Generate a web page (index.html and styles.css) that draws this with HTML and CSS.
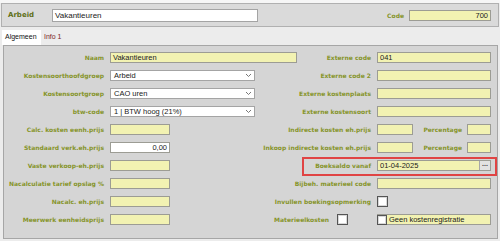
FILE: index.html
```html
<!DOCTYPE html>
<html lang="nl">
<head>
    <meta charset="UTF-8">
    <title>Kostensoort</title>
    <link rel="stylesheet" href="styles.css">
</head>
<body>
    <div class="header">
        <span class="head-label">Arbeid</span>
        <div class="head-input">Vakantieuren</div>
        <span class="spacer"></span>
        <span class="lbl">Code</span>
        <div class="fld code-fld">700</div>
    </div>
    <div class="tabs">
        <span class="tab active">Algemeen</span>
        <span class="tab">Info 1</span>
    </div>
    <div class="panel">
        <div class="form">
            <!-- rij 1 -->
            <span class="lbl">Naam</span>
            <div class="fld">Vakantieuren</div>
            <span class="lbl">Externe code</span>
            <div class="fld">041</div>
            <!-- rij 2 -->
            <span class="lbl">Kostensoorthoofdgroep</span>
            <div class="sel"><span>Arbeid</span><svg width="7" height="5" viewBox="0 0 7 5"><polyline points="1,1 3.5,3.5 6,1" fill="none" stroke="#777" stroke-width="1"/></svg></div>
            <span class="lbl">Externe code 2</span>
            <div class="fld"></div>
            <!-- rij 3 -->
            <span class="lbl">Kostensoortgroep</span>
            <div class="sel"><span>CAO uren</span><svg width="7" height="5" viewBox="0 0 7 5"><polyline points="1,1 3.5,3.5 6,1" fill="none" stroke="#777" stroke-width="1"/></svg></div>
            <span class="lbl">Externe kostenplaats</span>
            <div class="fld"></div>
            <!-- rij 4 -->
            <span class="lbl">btw-code</span>
            <div class="sel"><span>1 | BTW hoog (21%)</span><svg width="7" height="5" viewBox="0 0 7 5"><polyline points="1,1 3.5,3.5 6,1" fill="none" stroke="#777" stroke-width="1"/></svg></div>
            <span class="lbl">Externe kostensoort</span>
            <div class="fld"></div>
            <!-- rij 5 -->
            <span class="lbl">Calc. kosten eenh.prijs</span>
            <div class="cell"><div class="fld small"></div></div>
            <span class="lbl">Indirecte kosten eh.prijs</span>
            <div class="cell">
                <div class="fld pct-a"></div>
                <span class="lbl pct-lbl">Percentage</span>
                <div class="fld pct-b"></div>
            </div>
            <!-- rij 6 -->
            <span class="lbl">Standaard verk.eh.prijs</span>
            <div class="cell"><div class="fld small white num">0,00</div></div>
            <span class="lbl">Inkoop indirecte kosten eh.prijs</span>
            <div class="cell">
                <div class="fld pct-a"></div>
                <span class="lbl pct-lbl">Percentage</span>
                <div class="fld pct-b"></div>
            </div>
            <!-- rij 7 -->
            <span class="lbl">Vaste verkoop-eh.prijs</span>
            <div class="cell"><div class="fld small"></div></div>
            <span class="lbl">Boeksaldo vanaf</span>
            <div class="fld date-fld"><span>01-04-2025</span><span class="dots">...</span></div>
            <!-- rij 8 -->
            <span class="lbl">Nacalculatie tarief opslag %</span>
            <div class="cell"><div class="fld small"></div></div>
            <span class="lbl">Bijbeh. materieel code</span>
            <div class="fld"></div>
            <!-- rij 9 -->
            <span class="lbl">Nacalc. eh.prijs</span>
            <div class="cell"><div class="fld small"></div></div>
            <span class="lbl">Invullen boekingsopmerking</span>
            <div class="cell"><span class="cb"></span></div>
            <!-- rij 10 -->
            <span class="lbl">Meerwerk eenheidsprijs</span>
            <div class="cell"><div class="fld small"></div></div>
            <span class="lbl mat-lbl">Materieelkosten <span class="cb"></span></span>
            <div class="fld cb-fld"><span class="cb"></span><span>Geen kostenregistratie</span></div>
        </div>
        <div class="highlight"></div>
    </div>
</body>
</html>
```

FILE: styles.css
```css
*{
    box-sizing: border-box;
}
body{
    margin: 0;
    background: #ececec;
    font-family: "Liberation Sans", Arial, sans-serif;
    border-top: 3px solid #f6f6f6;
}
.header{
    margin: 0 1px;
    height: 24px;
    border: 1px solid #b0b0b0;
    background: #dadada;
    display: flex;
    align-items: center;
    padding: 0 7px 0 6px;
}
.head-label{
    width: 44px;
    font-family: "DejaVu Sans", sans-serif;
    font-weight: bold;
    font-size: 7px;
    color: #5f6f16;
}
.head-input{
    width: 206px;
    height: 13px;
    background: #fff;
    border: 1px solid #a4a4a4;
    font-size: 8px;
    line-height: 11px;
    padding-left: 2px;
    color: #222;
}
.spacer{
    flex: 1;
}
.code-fld{
    width: 82px;
    margin-left: 5px;
    text-align: right;
    padding-right: 2px;
}
.tabs{
    height: 18px;
    display: flex;
    align-items: flex-end;
    padding-left: 2px;
}
.tab{
    height: 15px;
    padding: 0 4px 0 3px;
    font-size: 7px;
    line-height: 14px;
    color: #7a1f1f;
}
.tab.active{
    width: 39px;
    background: #fff;
    color: #111;
}
.panel{
    position: relative;
    margin: 0 2px 0 3px;
    height: 194px;
    border: 1px solid #a6a6a6;
    background: #d5d5d5;
    padding-top: 6px;
}
.form{
    display: grid;
    grid-template-columns: 100px 187px 68px 114px;
    grid-auto-rows: 11px;
    column-gap: 6px;
    row-gap: 7px;
}
.lbl{
    display: flex;
    align-items: center;
    justify-content: flex-end;
    white-space: nowrap;
    font-family: "DejaVu Sans", sans-serif;
    font-weight: bold;
    font-size: 6px;
    color: #86942a;
}
.fld{
    height: 11px;
    background: #f2f2b2;
    border: 1px solid #9c9c94;
    font-size: 7.5px;
    line-height: 9px;
    padding-left: 2px;
    color: #1a1a1a;
    white-space: nowrap;
}
.cell{
    display: flex;
    align-items: center;
}
.small{
    width: 60px;
}
.white{
    background: #fff;
}
.num{
    text-align: right;
    padding-right: 2px;
}
.sel{
    width: 145px;
    height: 11px;
    background: #fff;
    border: 1px solid #a4a4a4;
    display: flex;
    align-items: center;
    justify-content: space-between;
    padding: 0 2px 0 3px;
    font-size: 7.5px;
    color: #1a1a1a;
}
.pct-a{
    width: 36px;
}
.pct-lbl{
    width: 49px;
    margin-right: 5px;
}
.pct-b{
    width: 24px;
}
.date-fld{
    display: flex;
    justify-content: space-between;
    padding-right: 0;
}
.dots{
    width: 11px;
    height: 9px;
    background: #e2e2e2;
    border-left: 1px solid #a8a8a8;
    font-size: 7px;
    font-weight: bold;
    line-height: 6px;
    text-align: center;
    color: #444;
}
.cb{
    display: inline-block;
    flex-shrink: 0;
    width: 11px;
    height: 11px;
    background: #fff;
    border: 1px solid #555;
    box-shadow: inset 0 0 0 1px #d8d8d8;
}
.mat-lbl{
    padding-right: 23px;
}
.mat-lbl .cb{
    margin-left: 8px;
}
.cb-fld{
    display: flex;
    align-items: center;
    padding-left: 0;
}
.cb-fld .cb{
    width: 10px;
    height: 10px;
    margin: 0 2px 0 -1px;
}
.highlight{
    position: absolute;
    left: 298px;
    top: 111px;
    width: 195px;
    height: 19px;
    border: 2px solid #e04444;
}
```
